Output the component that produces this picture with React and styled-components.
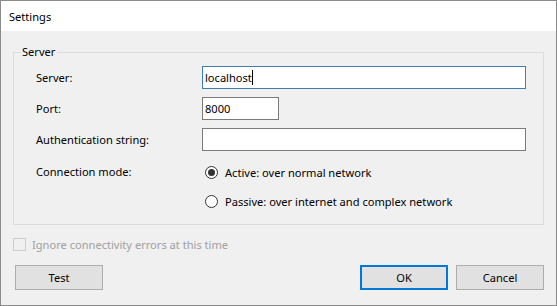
import React from "react";
import styled, { createGlobalStyle } from "styled-components";

const Global = createGlobalStyle`
  html, body {
    margin: 0;
    padding: 0;
    background: #f0f0f0;
  }
  * {
    box-sizing: border-box;
  }
`;

const Window = styled.div`
  width: 557px;
  height: 306px;
  border: 1px solid #8a8a8a;
  background: #f0f0f0;
  font-family: "Noto Sans", "Liberation Sans", sans-serif;
  font-size: 11.1px;
  color: #000;
  display: flex;
  flex-direction: column;
`;

const TitleBar = styled.div`
  height: 30px;
  background: #ffffff;
  display: flex;
  align-items: center;
  padding-left: 8px;
  flex-shrink: 0;
`;

const Body = styled.div`
  flex: 1;
  padding: 13px 12px 0 12px;
  display: flex;
  flex-direction: column;
`;

const Group = styled.fieldset`
  margin: 0;
  padding: 6px 17px 13px 22px;
  border: 1px solid #dcdcdc;
  display: grid;
  grid-template-columns: 166px 1fr;
  row-gap: 8px;
  align-items: center;
  min-width: 0;
`;

const Legend = styled.legend`
  margin-left: -16px;
  padding: 0 2px;
  line-height: 16px;
`;

const Label = styled.div`
  line-height: 16px;
  align-self: ${({ $top }) => ($top ? "start" : "center")};
  padding-top: ${({ $top }) => ($top ? "5px" : "0")};
`;

const TextBox = styled.div`
  height: 23px;
  width: ${({ $width }) => $width || "100%"};
  background: #ffffff;
  border: 1px solid ${({ $focused }) => ($focused ? "#3c7fb1" : "#7a7a7a")};
  padding: 0 2px;
  display: flex;
  align-items: center;
  line-height: 16px;
`;

const Caret = styled.span`
  display: inline-block;
  width: 1px;
  height: 15px;
  background: #000;
`;

const RadioList = styled.div`
  display: flex;
  flex-direction: column;
  gap: 9px;
  margin-top: 3px;
`;

const RadioRow = styled.div`
  height: 20px;
  display: flex;
  align-items: center;
  gap: 7px;
  margin-left: 3px;
`;

const RadioCircle = styled.span`
  width: 13px;
  height: 13px;
  border-radius: 50%;
  border: 1px solid #333333;
  background: #ffffff;
  display: flex;
  align-items: center;
  justify-content: center;

  &::after {
    content: "";
    width: 7px;
    height: 7px;
    border-radius: 50%;
    background: ${({ $checked }) => ($checked ? "#333333" : "transparent")};
  }
`;

const CheckRow = styled.div`
  margin-top: 13px;
  height: 13px;
  display: flex;
  align-items: center;
  gap: 6px;
  color: #a0a0a0;
`;

const CheckBox = styled.span`
  width: 13px;
  height: 13px;
  border: 1px solid #cccccc;
  background: #f0f0f0;
  flex-shrink: 0;
`;

const Buttons = styled.div`
  margin-top: 14px;
  display: flex;
  gap: 8px;
  padding-left: 2px;
`;

const Spacer = styled.div`
  flex: 1;
`;

const Button = styled.button`
  width: 88px;
  height: 25px;
  background: #e1e1e1;
  border: ${({ $default }) => ($default ? "2px solid #0078d7" : "1px solid #adadad")};
  font-family: inherit;
  font-size: inherit;
  color: #000;
  padding: 0;
  margin: 0;
`;

export default function App() {
  return (
    <>
      <Global />
      <Window>
        <TitleBar>Settings</TitleBar>
        <Body>
          <Group>
            <Legend>Server</Legend>
            <Label>Server:</Label>
            <TextBox $focused>
              localhost
              <Caret />
            </TextBox>
            <Label>Port:</Label>
            <TextBox $width="77px">8000</TextBox>
            <Label>Authentication string:</Label>
            <TextBox />
            <Label $top>Connection mode:</Label>
            <RadioList>
              <RadioRow>
                <RadioCircle $checked />
                Active: over normal network
              </RadioRow>
              <RadioRow>
                <RadioCircle />
                Passive: over internet and complex network
              </RadioRow>
            </RadioList>
          </Group>
          <CheckRow>
            <CheckBox />
            Ignore connectivity errors at this time
          </CheckRow>
          <Buttons>
            <Button>Test</Button>
            <Spacer />
            <Button $default>OK</Button>
            <Button>Cancel</Button>
          </Buttons>
        </Body>
      </Window>
    </>
  );
}
